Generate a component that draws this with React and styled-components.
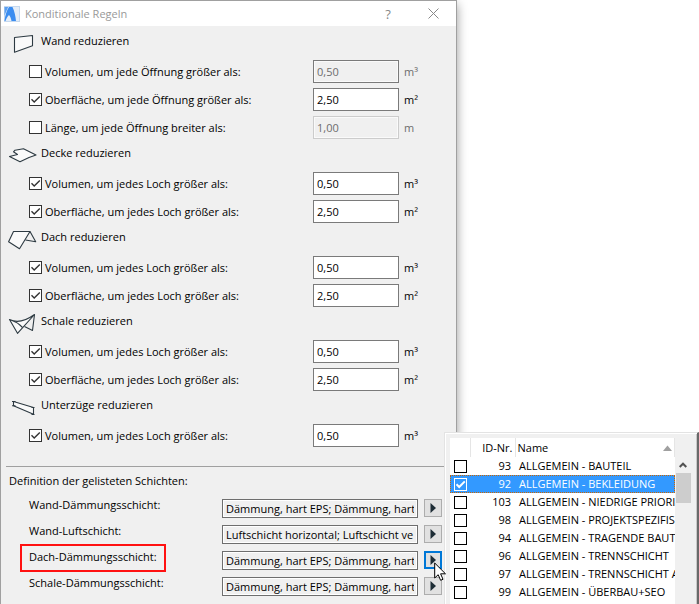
import React, { useState } from "react";
import styled, { createGlobalStyle } from "styled-components";

const GlobalStyle = createGlobalStyle`
  *, *::before, *::after { box-sizing: border-box; }
  body {
    margin: 0;
    background: #fff;
    color: #000;
    font-family: "Open Sans", "Noto Sans", sans-serif;
    font-size: 11px;
    line-height: 16px;
  }
  input, button { font: inherit; color: inherit; }
`;

const Stage = styled.main`
  position: relative;
  min-height: 100vh;
  display: flex;
  overflow: hidden;
`;

const Dialog = styled.form`
  flex: 1;
  max-width: 457px;
  min-height: 100vh;
  background: #f0f0f0;
  border: 1px solid #a0a0a0;
  border-bottom: 0;
  box-shadow: 0 4px 10px rgba(0, 0, 0, 0.4);
`;

const TitleBar = styled.header`
  display: flex;
  align-items: center;
  height: 25px;
  padding: 0 12px 0 3px;
  background: #fff;
  color: #999;
`;

const Title = styled.h1`
  flex: 1;
  margin: 0 0 0 5px;
  font-size: 11px;
  font-weight: 400;
`;

const TitleButton = styled.button`
  display: grid;
  place-items: center;
  width: 22px;
  height: 24px;
  margin-left: 23px;
  padding: 0;
  border: 0;
  background: none;
  font-size: 13px;
  color: #888;
`;

const Sections = styled.div`
  padding: 4px 0 16px;
`;

const Section = styled.section``;

const SectionHead = styled.div`
  display: flex;
  height: 28px;
  padding-left: 7px;
`;

const SectionTitle = styled.h2`
  margin: 3px 0 0 4px;
  font-size: 11px;
  font-weight: 400;
`;

const RuleRow = styled.div`
  display: grid;
  grid-template-columns: 13px 1fr 86px 57px;
  align-items: center;
  height: 28px;
  padding: 2px 0 3px 28px;
`;

const RuleLabel = styled.label`
  padding-left: 3px;
  white-space: nowrap;
`;

const CheckWrap = styled.span`
  display: grid;
  width: 13px;
  height: 13px;

  & > * { grid-area: 1 / 1; }
  & > svg { pointer-events: none; visibility: hidden; }
  & > input:checked + svg { visibility: visible; }
`;

const CheckInput = styled.input`
  appearance: none;
  width: 13px;
  height: 13px;
  margin: 0;
  border: 1px solid ${(p) => (p.$selected ? "#fff" : p.$line)};
  background: ${(p) => (p.$selected ? "#3399ff" : "#fff")};
`;

const ValueInput = styled.input`
  width: 100%;
  height: 23px;
  padding: 0 3px;
  border: 1px solid ${(p) => (p.$faint ? "#ccc" : "#7a7a7a")};
  border-radius: 0;
  background: #fff;
  outline: none;

  &:disabled {
    background: #f0f0f0;
    color: #6d6d6d;
    box-shadow: inset 0 0 0 1px #fafafa;
  }
`;

const Unit = styled.span`
  padding-left: 5px;
  color: ${(p) => (p.$off ? "#6d6d6d" : "#000")};
`;

const Layers = styled.section`
  margin: 0 5px;
  padding: 6px 0 8px;
  border-top: 1px solid #a0a0a0;
`;

const LayersTitle = styled.h2`
  margin: 0 0 8px 3px;
  font-size: 11px;
  font-weight: 400;
`;

const LayerRow = styled.div`
  display: grid;
  grid-template-columns: 1fr 196px 18px;
  column-gap: 6px;
  height: 26px;
  padding: 2px 9px 0 14px;
`;

const LayerLabel = styled.label`
  justify-self: start;
  height: 28px;
  margin-top: -7px;
  padding: 3px 7px 0;
  border: 2px solid ${(p) => (p.$marked ? "#f11" : "transparent")};
  white-space: nowrap;
`;

const LayerInput = styled.input`
  width: 100%;
  height: 19px;
  padding: 0 3px;
  border: 1px solid #6e6e6e;
  border-radius: 0;
  background: #f0f0f0;
  box-shadow: inset 0 0 0 1px #fff;
  outline: none;
`;

const ArrowButton = styled.button`
  position: relative;
  display: grid;
  place-items: center;
  width: 18px;
  height: 18px;
  padding: 0;
  border: ${(p) => (p.$active ? "2px solid #0078d7" : "1px solid #adadad")};
  background: #e1e1e1;
`;

const Pointer = styled.svg`
  position: absolute;
  left: 8px;
  top: 9px;
  z-index: 3;
  pointer-events: none;
`;

const Popup = styled.aside`
  position: absolute;
  z-index: 2;
  top: 432px;
  right: 0;
  bottom: 0;
  left: 444px;
  display: grid;
  grid-template-columns: 1fr 16px;
  padding: 5px 6px 0 5px;
  background: #f0f0f0;
  border: 1px solid #e3e3e3;
  border-right: 2px solid #696969;
  border-bottom: 0;
  box-shadow: inset 1px 1px 0 #fff, inset -1px 0 0 #c8c8c8;
  overflow: hidden;
`;

const TableClip = styled.div`
  min-width: 0;
  overflow: hidden;
  background: #fff;
`;

const List = styled.table`
  width: 100%;
  table-layout: fixed;
  border-collapse: collapse;

  col:nth-child(1) { width: 20px; }
  col:nth-child(2) { width: 45px; }
`;

const HeadCell = styled.th`
  height: 19px;
  padding: 0 2px;
  border-right: 1px solid #e5e5e5;
  font-weight: 400;
  text-align: ${(p) => p.$align || "left"};
`;

const NameHead = styled.div`
  display: flex;
  justify-content: space-between;
  align-items: center;
`;

const Item = styled.tr`
  background: ${(p) => (p.$selected ? "#3399ff" : "#fff")};
  color: ${(p) => (p.$selected ? "#fff" : "#000")};
  outline: ${(p) => (p.$selected ? "1px dotted #cc6600" : "none")};
  outline-offset: -1px;
`;

const Cell = styled.td`
  height: 18px;
  padding: 0 ${(p) => (p.$flush ? "0" : "4px")} 0 4px;
  line-height: 16px;
  text-align: ${(p) => p.$align || "left"};
  white-space: nowrap;
  overflow: hidden;
`;

const ScrollTrack = styled.div`
  margin-top: 19px;
  display: flex;
  flex-direction: column;
`;

const ScrollUp = styled.button`
  display: grid;
  place-items: center;
  height: 16px;
  padding: 0;
  border: 0;
  background: none;
`;

const ScrollThumb = styled.div`
  width: 15px;
  height: 30px;
  margin-left: 1px;
  background: #cdcdcd;
`;

const Icon = ({ children }) => (
  <svg width="29" height="24" viewBox="0 0 29 24" fill="#fafafa" stroke="#2d3a42" strokeWidth="1.1" strokeLinejoin="round" aria-hidden="true">
    {children}
  </svg>
);

/* Every drawing is laid out on a 29 x 24 grid. */
const icons = {
  wall: <path d="M6.5 7.5 L24.5 5.5 V15.8 L6.5 22.3 Z" />,
  slab: <path d="M1.5 14.5 L9.5 12.5 L5.5 9.8 L7 8.2 L15.5 6.7 L28 13 L21 15.5 L12 19.7 Z" />,
  roof: (
    <>
      <path d="M5.5 5.5 H22 L11.5 22.7 L0.6 15.8 Z" />
      <path d="M22 5.5 L27.7 15.8 L17.5 14" fill="none" />
    </>
  ),
  shell: (
    <>
      <path d="M1.5 9.5 Q12 15 26.5 4.5 L9.5 23.3 Z" />
      <path d="M26.5 4.5 L24.5 20.5 L16.5 16.5 M5.5 11.3 Q9 12 14.5 17.5" fill="none" />
    </>
  ),
  beam: (
    <>
      <path d="M5.5 7.5 L25.5 13.5 V20.2 L5.5 11.8 Z" />
      <path d="M4 7.5 H7.5 M4 11.8 H7.5 M23.5 13.5 H26.5 M23.5 20.5 H26.5" fill="none" />
    </>
  ),
};

const opening = "um jede Öffnung";
const hole = "um jedes Loch";
const holeRules = [
  { label: `Volumen, ${hole} größer als:`, value: "0,50", unit: "m³", on: true },
  { label: `Oberfläche, ${hole} größer als:`, value: "2,50", unit: "m²", on: true },
];

const sections = [
  {
    id: "wall",
    title: "Wand reduzieren",
    rules: [
      { label: `Volumen, ${opening} größer als:`, value: "0,50", unit: "m³", on: false },
      { label: `Oberfläche, ${opening} größer als:`, value: "2,50", unit: "m²", on: true },
      { label: `Länge, ${opening} breiter als:`, value: "1,00", unit: "m", on: false, faint: true },
    ],
  },
  { id: "slab", title: "Decke reduzieren", rules: holeRules },
  { id: "roof", title: "Dach reduzieren", rules: holeRules },
  { id: "shell", title: "Schale reduzieren", rules: holeRules },
  { id: "beam", title: "Unterzüge reduzieren", rules: holeRules.slice(0, 1) },
];

const insulation = "Dämmung, hart EPS; Dämmung, hart";
const layers = [
  { label: "Wand-Dämmungsschicht:", value: insulation },
  { label: "Wand-Luftschicht:", value: "Luftschicht horizontal; Luftschicht ve" },
  { label: "Dach-Dämmungsschicht:", value: insulation, active: true },
  { label: "Schale-Dämmungsschicht:", value: insulation },
];

const materials = [
  [93, "ALLGEMEIN - BAUTEIL"],
  [92, "ALLGEMEIN - BEKLEIDUNG"],
  [103, "ALLGEMEIN - NIEDRIGE PRIORI"],
  [98, "ALLGEMEIN - PROJEKTSPEZIFIS"],
  [94, "ALLGEMEIN - TRAGENDE BAUT"],
  [96, "ALLGEMEIN - TRENNSCHICHT"],
  [97, "ALLGEMEIN - TRENNSCHICHT A"],
  [99, "ALLGEMEIN - ÜBERBAU+SEO"],
];

function Check({ selected, line = "#333", ...rest }) {
  return (
    <CheckWrap>
      <CheckInput type="checkbox" $selected={selected} $line={line} {...rest} />
      <svg width="13" height="13" viewBox="0 0 13 13" fill="none" stroke={selected ? "#fff" : "#333"} strokeWidth={selected ? 2 : 1.4} aria-hidden="true">
        <path d="M2.5 6.3 L5.2 9 L10.8 3.4" />
      </svg>
    </CheckWrap>
  );
}

function Rule({ id, rule }) {
  const [on, setOn] = useState(rule.on);
  return (
    <RuleRow>
      <Check id={id} checked={on} onChange={(e) => setOn(e.target.checked)} />
      <RuleLabel htmlFor={id}>{rule.label}</RuleLabel>
      <ValueInput aria-label={rule.label} defaultValue={rule.value} disabled={!on} $faint={rule.faint && !on} />
      <Unit $off={!on}>{rule.unit}</Unit>
    </RuleRow>
  );
}

function MaterialPopup() {
  const [chosen, setChosen] = useState(92);
  return (
    <Popup>
      <TableClip>
        <List>
          <colgroup>
            <col />
            <col />
            <col />
          </colgroup>
          <thead>
            <tr>
              <HeadCell />
              <HeadCell $align="right">ID-Nr.</HeadCell>
              <HeadCell>
                <NameHead>
                  Name
                  <svg width="9" height="6" viewBox="0 0 9 6" fill="#a0a0a0" aria-hidden="true">
                    <path d="M0 6 L4.5 0.5 L9 6 Z" />
                  </svg>
                </NameHead>
              </HeadCell>
            </tr>
          </thead>
          <tbody>
            {materials.map(([nr, name]) => (
              <Item key={nr} $selected={nr === chosen}>
                <Cell>
                  <Check
                    aria-label={name}
                    selected={nr === chosen}
                    line="#000"
                    checked={nr === chosen}
                    onChange={() => setChosen(nr)}
                  />
                </Cell>
                <Cell $align="right">{nr}</Cell>
                <Cell $flush>{name}</Cell>
              </Item>
            ))}
          </tbody>
        </List>
      </TableClip>
      <ScrollTrack>
        <ScrollUp type="button" aria-label="Nach oben">
          <svg width="8" height="6" viewBox="0 0 8 6" fill="none" stroke="#505050" strokeWidth="2" aria-hidden="true">
            <path d="M0.7 5 L4 1.7 L7.3 5" />
          </svg>
        </ScrollUp>
        <ScrollThumb />
      </ScrollTrack>
    </Popup>
  );
}

export default function App() {
  return (
    <Stage>
      <GlobalStyle />
      <Dialog>
        <TitleBar>
          <svg width="16" height="16" viewBox="0 0 16 16" aria-hidden="true">
            <rect x="0.5" y="0.5" width="15" height="15" fill="#e4edf7" stroke="#c5d8ee" />
            <path d="M0.5 1 H4.2 L0.5 9.5 Z" fill="#5b9ff0" />
            <path d="M5 1 H8.5 C10.5 5 11.5 10 12 15 H7.5 C7 12 6 10 5 9 C3.4 10.5 2.2 12.5 1.5 15 H0.5 C1.2 9 2.8 4.5 5 1 Z" fill="#3b8df0" />
          </svg>
          <Title>Konditionale Regeln</Title>
          <TitleButton type="button" aria-label="Hilfe">?</TitleButton>
          <TitleButton type="button" aria-label="Schließen">
            <svg width="11" height="11" viewBox="0 0 11 11" stroke="#888" strokeWidth="1" aria-hidden="true">
              <path d="M0.5 0.5 L10.5 10.5 M10.5 0.5 L0.5 10.5" />
            </svg>
          </TitleButton>
        </TitleBar>
        <Sections>
          {sections.map((s) => (
            <Section key={s.id}>
              <SectionHead>
                <Icon>{icons[s.id]}</Icon>
                <SectionTitle>{s.title}</SectionTitle>
              </SectionHead>
              {s.rules.map((rule, i) => (
                <Rule key={i} id={`${s.id}-${i}`} rule={rule} />
              ))}
            </Section>
          ))}
        </Sections>
        <Layers>
          <LayersTitle>Definition der gelisteten Schichten:</LayersTitle>
          {layers.map((l, i) => (
            <LayerRow key={l.label}>
              <LayerLabel htmlFor={`layer-${i}`} $marked={l.active}>{l.label}</LayerLabel>
              <LayerInput id={`layer-${i}`} readOnly value={l.value} />
              <ArrowButton type="button" aria-label={`${l.label} auswählen`} $active={l.active}>
                <svg width="6" height="10" viewBox="0 0 6 10" fill="#1e2d36" aria-hidden="true">
                  <path d="M0.5 0 L6 5 L0.5 10 Z" />
                </svg>
                {l.active && (
                  <Pointer width="13" height="20" viewBox="0 0 13 20" fill="#fff" stroke="#000" aria-hidden="true">
                    <path d="M0.7 1 V16 L4.2 12.7 L6.6 18.3 L9 17.3 L6.6 11.8 H11.5 Z" />
                  </Pointer>
                )}
              </ArrowButton>
            </LayerRow>
          ))}
        </Layers>
      </Dialog>
      <MaterialPopup />
    </Stage>
  );
}
